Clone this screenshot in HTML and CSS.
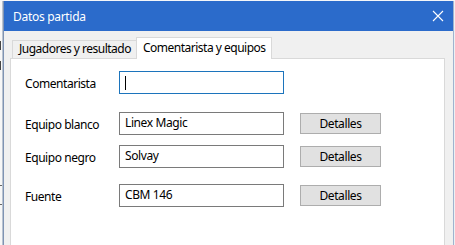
FILE: index.html
```html
<!DOCTYPE html>
<html lang="es">
<head>
<meta charset="utf-8">
<title>Datos partida</title>
<link rel="stylesheet" href="styles.css">
</head>
<body>
<div class="desk">
  <div class="behind left">
    <span class="mark"></span>
    <span class="mark"></span>
    <span class="dots"></span>
    <span class="dots"></span>
  </div>
  <div class="dialog">
    <div class="titlebar">
      <span class="title">Datos partida</span>
      <svg class="close" width="12" height="12" viewBox="0 0 12 12">
        <path d="M1 1 L11 11 M11 1 L1 11" stroke="#ffffff" stroke-width="1.1" fill="none"/>
      </svg>
    </div>
    <div class="client">
      <div class="tabs">
        <div class="tab">Jugadores y resultado</div>
        <div class="tab active">Comentarista y equipos</div>
      </div>
      <div class="panel">
        <div class="row r1">
          <span class="label">Comentarista</span>
          <div class="input focus"><span class="caret"></span></div>
        </div>
        <div class="row r2">
          <span class="label">Equipo blanco</span>
          <div class="input">Linex Magic</div>
          <div class="btn">Detalles</div>
        </div>
        <div class="row r3">
          <span class="label">Equipo negro</span>
          <div class="input">Solvay</div>
          <div class="btn">Detalles</div>
        </div>
        <div class="row r4">
          <span class="label">Fuente</span>
          <div class="input">CBM 146</div>
          <div class="btn">Detalles</div>
        </div>
      </div>
    </div>
  </div>
  <div class="behind right"></div>
</div>
</body>
</html>
```
FILE: styles.css
```css
html, body {
  margin: 0;
  padding: 0;
}
body {
  width: 455px;
  height: 245px;
  overflow: hidden;
  background: #f4f6f9;
  font-family: "Noto Sans", "Open Sans", sans-serif;
  font-size: 12px;
  color: #000;
}
.desk {
  display: flex;
  height: 245px;
  padding-top: 1px;
  box-sizing: border-box;
}
.behind {
  width: 3px;
  flex: none;
  overflow: hidden;
  box-sizing: border-box;
}
.behind.left {
  display: flex;
  flex-direction: column;
  align-items: flex-start;
  border-right: 1px solid #b9c3d0;
  background: #f7f7f7;
  padding-top: 40px;
}
.mark {
  width: 1px;
  height: 9px;
  background: #444;
  margin-bottom: 11px;
}
.dots {
  width: 2px;
  height: 1px;
  background: #666;
  margin-top: 104px;
}
.dots + .dots {
  margin-top: 18px;
}
.behind.right {
  background: #eef0f3;
  border-left: 1px solid #9fb3cf;
}
.dialog {
  width: 449px;
  flex: none;
  display: flex;
  flex-direction: column;
  border-left: 1px solid #7f93b3;
}
.titlebar {
  height: 30px;
  background: #2b6bcb;
  display: flex;
  align-items: center;
  justify-content: space-between;
  padding: 0 9px 0 9px;
  color: #fff;
}
.title {
  font-size: 12px;
  letter-spacing: -0.3px;
}
.close {
  display: block;
}
.client {
  flex: 1;
  background: #f0f0f0;
  padding-top: 6px;
  display: flex;
  flex-direction: column;
}
.tabs {
  display: flex;
  align-items: flex-end;
  height: 21px;
  padding-left: 8px;
}
.tab {
  box-sizing: border-box;
  height: 18px;
  border: 1px solid #d9d9d9;
  border-bottom: none;
  background: #f0f0f0;
  padding: 0 5px 0 6px;
  line-height: 16px;
  letter-spacing: -0.5px;
  white-space: nowrap;
}
.tab.active {
  height: 22px;
  margin-bottom: -1px;
  margin-left: -1px;
  background: #fff;
  position: relative;
  z-index: 1;
  padding: 2px 5px 0 6px;
  line-height: 16px;
}
.panel {
  flex: 1;
  margin-left: 6px;
  width: 435px;
  box-sizing: border-box;
  background: #fff;
  border: 1px solid #d9d9d9;
  border-bottom: none;
  padding: 12px 0 0 14px;
}
.row {
  display: flex;
  align-items: center;
  height: 23px;
}
.r2 { margin-top: 18px; }
.r3 { margin-top: 10px; }
.r4 { margin-top: 16px; }
.label {
  width: 94px;
  flex: none;
  letter-spacing: -0.45px;
  padding-top: 2px;
}
.input {
  box-sizing: border-box;
  width: 165px;
  height: 23px;
  border: 1px solid #7a7a7a;
  padding: 0 0 3px 5px;
  display: flex;
  align-items: center;
  letter-spacing: -0.4px;
}
.input.focus {
  border-color: #1c74bc;
  padding-bottom: 0;
}
.caret {
  width: 1px;
  height: 14px;
  background: #000;
}
.btn {
  box-sizing: border-box;
  margin-left: 16px;
  width: 81px;
  height: 21px;
  background: #e1e1e1;
  border: 1px solid #adadad;
  display: flex;
  align-items: center;
  justify-content: center;
  letter-spacing: -0.4px;
  padding-bottom: 1px;
}
```
